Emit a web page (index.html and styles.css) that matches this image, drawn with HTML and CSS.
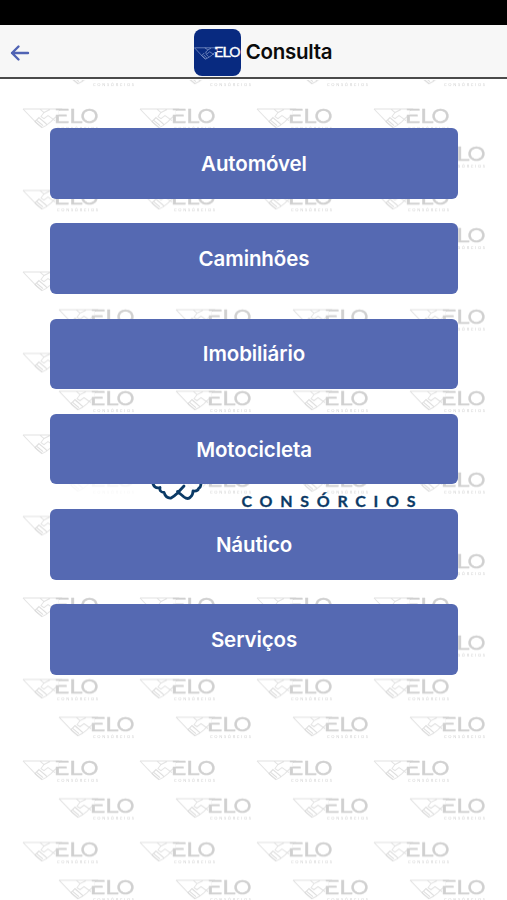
FILE: index.html
```
<!DOCTYPE html>
<html lang="pt-BR">
<head>
<meta charset="utf-8">
<meta name="viewport" content="width=device-width, initial-scale=1">
<title>Consulta</title>
<link rel="stylesheet" href="styles.css">
</head>
<body>
<div class="status-bar"></div>
<header class="header">
  <svg class="back" viewBox="0 0 20 18" role="img" aria-label="Voltar"><path d="M18 9H2M8.500 2.500L2 9l6.500 6.500"/></svg>
  <div class="brand">
    <svg class="app-icon" viewBox="0 0 47 47">
      <rect width="47" height="47" rx="8" fill="#082a80"/>
      <g transform="translate(.5 18.500) scale(.61)">
        <path class="icon-hand" d="M0 .5H38L32 5M0 .5L14 15.500 18 19 22 17 28 13 33 8M17 .5L22 4 27 1M22 4L18 8 21 10 25 7 32 12M16 9L12 13 18 19M15 12L20 17M18 10L23 15"/>
        <g class="icon-word"><text x="31.500" y="16" textLength="16" lengthAdjust="spacingAndGlyphs">E</text><text x="45.500" y="16" textLength="14" lengthAdjust="spacingAndGlyphs">L</text><text x="57" y="16" textLength="18.500" lengthAdjust="spacingAndGlyphs">O</text></g>
        <rect class="icon-cut" x="31" y="3" width="5.500" height="4.500"/>
      </g>
    </svg>
    <h1 class="title">Consulta</h1>
  </div>
</header>
<main class="content">
  <svg class="backdrop" width="507" height="820" viewBox="0 80 507 820" aria-hidden="true">
    <defs>
      <g id="mark">
        <path class="hand" d="M0 .5H38L32 5M0 .5L14 15 19 19 23 17 28 13 33 8M17 .5L21 4 27 1M21 4L18 8 21 10 25 7 32 12"/>
        <path class="hand fingers" d="M16 9L12 13 19 19M14 12L20 17M17 10L23 15M12 13L16 9 24 16"/>
        <g class="word"><text x="30.500" y="14.300" textLength="16" lengthAdjust="spacingAndGlyphs">E</text><text x="46" y="14.300" textLength="13.500" lengthAdjust="spacingAndGlyphs">L</text><text x="57.500" y="14.300" textLength="18" lengthAdjust="spacingAndGlyphs">O</text></g>
        <rect class="cut" x="31" y="1.800" width="4.800" height="4.400"/>
        <text class="tagline" x="34" y="21" textLength="41">CONSÓRCIOS</text>
      </g>
      <pattern id="marks" x="20" y="23.500" width="117" height="81.500" patternUnits="userSpaceOnUse">
        <use href="#mark" x="3" y="3.500"/>
        <use href="#mark" x="39" y="41.200"/>
      </pattern>
    </defs>
    <rect x="20" y="80" width="468" height="820" fill="url(#marks)"/>
    <rect x="66" y="484" width="137" height="18" fill="#fff" fill-opacity=".8"/>
    <path class="big-hand" d="M153 484Q155 489 160 487.500Q159 492 164 492.500Q166 498.500 171 498Q174 496.500 177 493.500L184 486M177.500 491.500L184 497Q188 500 190.500 497Q193 495 193 491Q198 491.500 198.500 488.500Q201 487.500 201 483"/>
    <text class="big-tagline" x="241.500" y="507" textLength="174">CONSÓRCIOS</text>
  </svg>
  <nav class="menu">
    <button class="option">Automóvel</button>
    <button class="option">Caminhões</button>
    <button class="option">Imobiliário</button>
    <button class="option">Motocicleta</button>
    <button class="option">Náutico</button>
    <button class="option">Serviços</button>
  </nav>
</main>
</body>
</html>
```
FILE: styles.css
```
* { box-sizing: border-box; }
body {
  margin: 0;
  height: 900px;
  overflow: hidden;
  background: #fff;
  font-family: Inter, "Liberation Sans", sans-serif;
}
.status-bar { height: 25px; background: #000; }
.header {
  display: grid;
  grid-template-columns: 1fr auto 1fr;
  align-items: center;
  height: 54px;
  padding: 1px 10px 0;
  background: #f7f7f7;
  border-bottom: 2px solid #4b4b4b;
}
.back {
  width: 20px;
  height: 18px;
  margin-top: 2px;
  fill: none;
  stroke: #5063b4;
  stroke-width: 2.4;
  stroke-linecap: round;
  stroke-linejoin: round;
}
.brand {
  grid-column: 2;
  display: flex;
  align-items: center;
  gap: 5px;
  margin-left: 19px;
}
.app-icon { width: 47px; height: 47px; margin-top: 1px; }
.icon-hand { fill: none; stroke: #9fb0d8; stroke-width: 1; }
.icon-word { fill: #fff; font: 400 21px Lato, sans-serif; stroke: #fff; stroke-width: .5; }
.icon-cut { fill: #082a80; }
.title {
  margin: 1px 0 0;
  font-size: 20.5px;
  font-weight: 600;
  line-height: 26px;
  letter-spacing: -.25px;
  color: #0b0b0b;
}
.content { position: relative; height: 821px; padding: 49px 49px 0 50px; }
.backdrop { position: absolute; left: 0; top: 1px; }
.hand { fill: none; stroke: #e2e2e2; stroke-width: 1; }
.fingers { stroke: #dadada; }
.word { fill: #d0d0d0; font: 400 20px Lato, sans-serif; stroke: #d0d0d0; stroke-width: .3; }
.cut { fill: #fff; }
.tagline { fill: #cfcfcf; font: 400 4px Lato, sans-serif; }
.big-hand { fill: none; stroke: #0b3a66; stroke-width: 2.8; stroke-linecap: round; stroke-linejoin: round; }
.big-tagline { fill: #0b3a66; font: 700 16px Lato, sans-serif; stroke: #0b3a66; stroke-width: .3; }
.menu { position: relative; display: flex; flex-direction: column; gap: 24.7px; }
.option {
  height: 70.6px;
  padding: 1px 0 0;
  border: 0;
  border-radius: 6px;
  background: #5569b2;
  color: #fff;
  font: 630 20.5px/26px Inter, "Liberation Sans", sans-serif;
  letter-spacing: -.1px;
}
```
